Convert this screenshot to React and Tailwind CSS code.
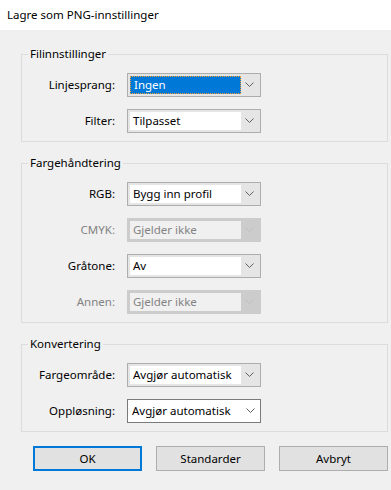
import React from "react";

const font = { fontFamily: '"Segoe UI", "Noto Sans", "Open Sans", sans-serif' };

function Chevron({ disabled }) {
  return (
    <svg width="9" height="6" viewBox="0 0 9 6" className="block">
      <path
        d="M0.5 0.5 L4.5 4.5 L8.5 0.5"
        fill="none"
        stroke={disabled ? "#bfbfbf" : "#606060"}
        strokeWidth="1"
      />
    </svg>
  );
}

function Combo({ value, variant = "normal" }) {
  if (variant === "open") {
    return (
      <div className="flex h-[24px] w-[134px] items-center border border-[#7a7a7a] bg-white">
        <div className="w-[113px] pl-[4px] leading-none">{value}</div>
        <div className="flex flex-1 justify-center">
          <Chevron />
        </div>
      </div>
    );
  }
  const disabled = variant === "disabled";
  const focus = variant === "focus";
  return (
    <div
      className={
        "flex h-[24px] w-[134px] items-stretch border p-[2px] " +
        (disabled ? "border-[#cccccc] bg-[#cccccc]" : "border-[#adadad] bg-[#e5e5e5]")
      }
    >
      <div
        className={
          "flex w-[111px] items-center pl-[3px] leading-none " +
          (focus
            ? "border border-dotted border-[#f0a030] bg-[#0078d7] text-white"
            : disabled
            ? "bg-[#f0f0f0] text-[#838383]"
            : "bg-white text-black")
        }
      >
        {value}
      </div>
      <div className="flex flex-1 items-center justify-center">
        <Chevron disabled={disabled} />
      </div>
    </div>
  );
}

function Row({ label, value, variant }) {
  return (
    <div className="flex items-center">
      <div
        className={
          "w-[105px] pr-[12px] text-right " +
          (variant === "disabled" ? "text-[#838383]" : "text-black")
        }
      >
        {label}
      </div>
      <Combo value={value} variant={variant} />
    </div>
  );
}

function Group({ title, children }) {
  return (
    <fieldset className="ml-[21px] w-[367px] border border-[#dcdcdc] pb-[8px]">
      <legend className="ml-[6px] h-[16px] px-[2px] leading-[16px]">{title}</legend>
      <div className="mt-[11px] flex flex-col gap-[12px]">{children}</div>
    </fieldset>
  );
}

export default function App() {
  return (
    <div className="h-[490px] w-[391px] overflow-hidden bg-[#f0f0f0] text-[11.5px] text-black" style={font}>
      <div className="flex h-[30px] items-center bg-white pl-[7px]">Lagre som PNG-innstillinger</div>

      <div className="mt-[16px] flex flex-col gap-[13px]">
        <Group title="Filinnstillinger">
          <Row label="Linjesprang:" value="Ingen" variant="focus" />
          <Row label="Filter:" value="Tilpasset" />
        </Group>

        <Group title="Fargehåndtering">
          <Row label="RGB:" value="Bygg inn profil" />
          <Row label="CMYK:" value="Gjelder ikke" variant="disabled" />
          <Row label="Gråtone:" value="Av" />
          <Row label="Annen:" value="Gjelder ikke" variant="disabled" />
        </Group>

        <Group title="Konvertering">
          <Row label="Fargeområde:" value="Avgjør automatisk" />
          <Row label="Oppløsning:" value="Avgjør automatisk" variant="open" />
        </Group>
      </div>

      <div className="mt-[14px] flex gap-[14px] pl-[33px]">
        <button className="h-[25px] w-[109px] border-2 border-[#0078d7] bg-[#e1e1e1]">OK</button>
        <button className="h-[25px] w-[109px] border border-[#adadad] bg-[#e1e1e1]">Standarder</button>
        <button className="h-[25px] w-[109px] border border-[#adadad] bg-[#e1e1e1]">Avbryt</button>
      </div>
    </div>
  );
}
